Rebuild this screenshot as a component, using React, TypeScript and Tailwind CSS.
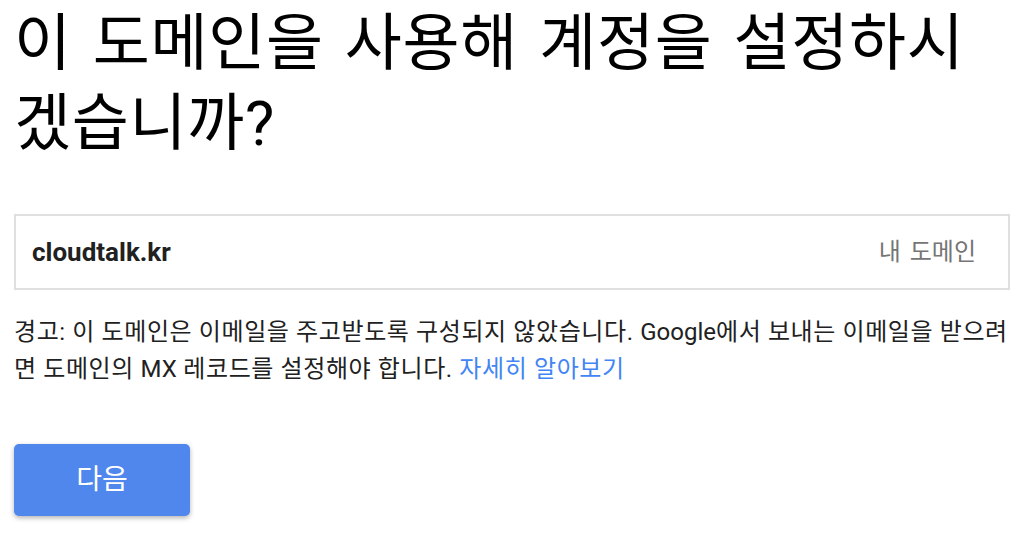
export default function App() {
  return (
    <div
      className="min-h-[534px] bg-white px-[14px] pt-[4px]"
      style={{ fontFamily: 'Roboto, "Noto Sans CJK KR", sans-serif' }}
    >
      <h1 className="w-[975px] text-[62px] leading-[80px] font-normal tracking-[0.7px] text-black [word-spacing:5px]">
        이 도메인을 사용해 계정을 설정하시겠습니까?
      </h1>

      <div className="mt-[50px] flex h-[76px] w-[996px] items-center justify-between border-2 border-[#e0e0e0] px-[16px]">
        <span className="text-[26px] font-bold text-[#212121]">cloudtalk.kr</span>
        <span className="pr-[16px] text-[24px] text-[#757575] [word-spacing:3px]">내 도메인</span>
      </div>

      <p className="mt-[24px] w-[996px] text-[24px] leading-[37px] tracking-[0.6px] text-[#212121]">
        경고: 이 도메인은 이메일을 주고받도록 구성되지 않았습니다. <span className="tracking-normal">Google</span>에서 보내는 이메일을 받으려면 도메인의 <span className="tracking-normal">MX</span> 레코드를 설정해야 합니다.{" "}
        <a className="text-[#4285f4]" href="#">
          자세히 알아보기
        </a>
      </p>

      <button className="mt-[56px] flex h-[72px] w-[176px] items-center justify-center rounded-[5px] bg-[#4f87ec] text-[28px] text-white shadow-[0_2px_5px_rgba(0,0,0,0.3)]">
        다음
      </button>
    </div>
  );
}
